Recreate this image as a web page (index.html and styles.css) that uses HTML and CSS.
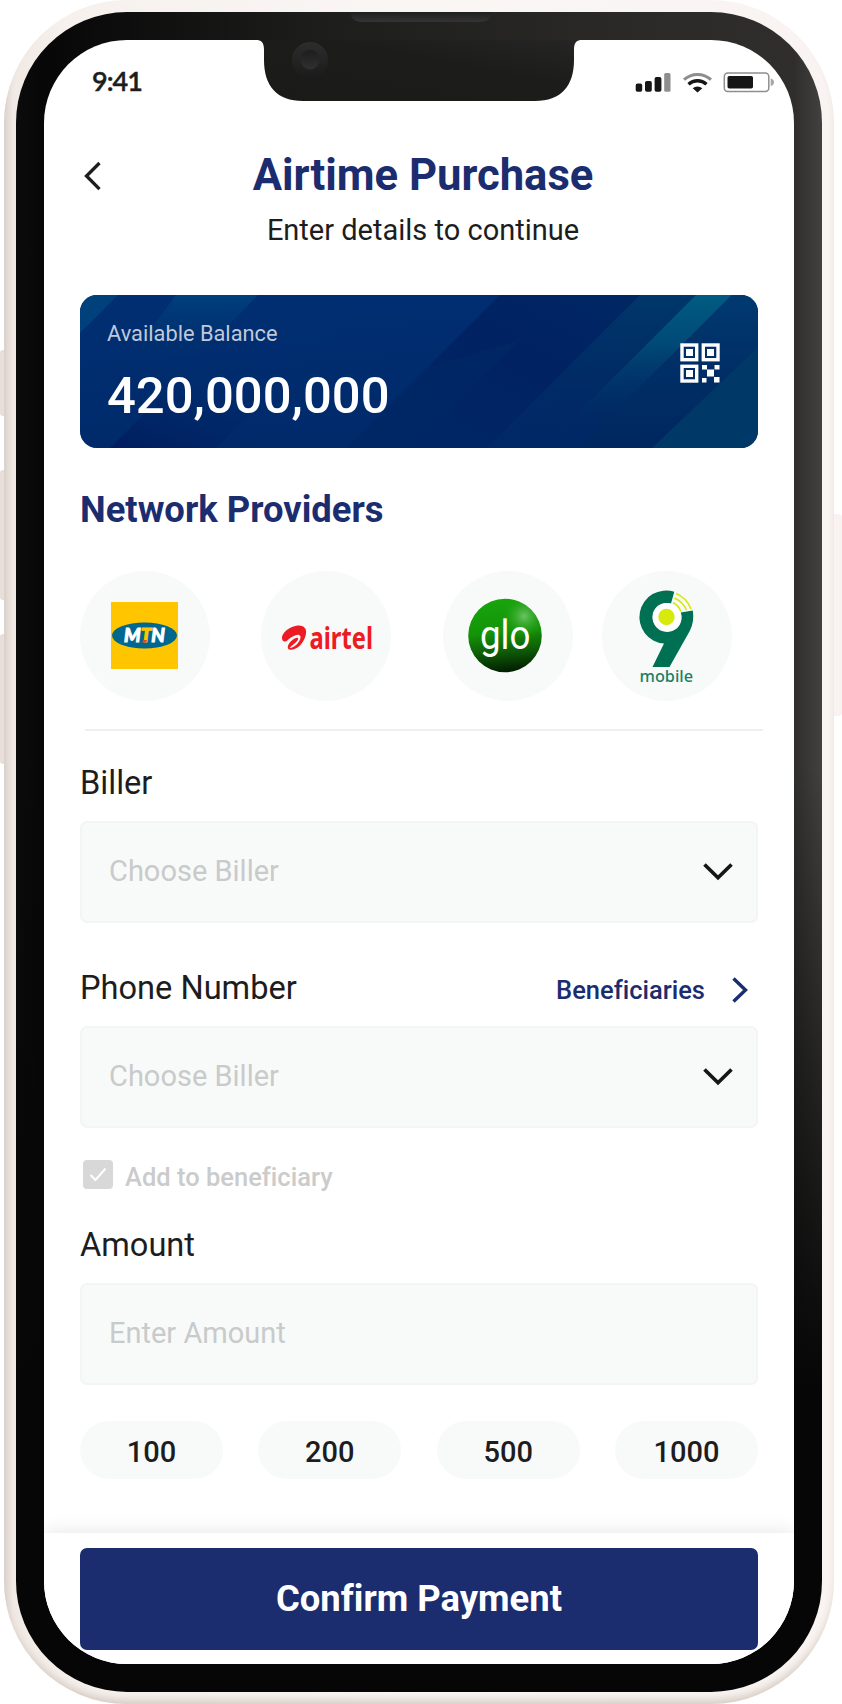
FILE: index.html
```html
<!DOCTYPE html>
<html lang="en">
<head>
<meta charset="utf-8">
<title>Airtime Purchase</title>
<link rel="stylesheet" href="styles.css">
</head>
<body>
<div class="stage">
  <i class="side side-mute"></i><i class="side side-up"></i><i class="side side-down"></i><i class="side side-power"></i>
  <div class="phone">
    <div class="bezel">
      <i class="speaker"></i>
      <main class="screen">
        <svg class="notch" width="326" height="61" viewBox="0 0 326 61">
          <defs>
            <linearGradient id="ng" x1="0" y1="1" x2="1" y2="0"><stop offset="0" stop-color="#1a1a18"/><stop offset=".6" stop-color="#1c1c1b"/><stop offset="1" stop-color="#262525"/></linearGradient>
            <linearGradient id="lens" x1="0" y1="0" x2="0" y2="1"><stop offset="0" stop-color="#2d2d2d"/><stop offset="1" stop-color="#1b1b1a"/></linearGradient>
            <linearGradient id="lens-in" x1="0" y1="0" x2="0" y2="1"><stop offset="0" stop-color="#1d1d1d"/><stop offset="1" stop-color="#303030"/></linearGradient>
          </defs>
          <path fill="url(#ng)" d="M0 0 C5 0 8 2 8 10 V20 C8 46 21 61 47 61 H279 C305 61 318 46 318 20 V10 C318 2 321 0 326 0Z"/>
          <circle cx="54" cy="20" r="18" fill="url(#lens)"/>
          <circle cx="54" cy="19.500" r="9.800" fill="url(#lens-in)"/>
        </svg>
        <div class="status">
          <span class="time">9:41</span>
          <svg class="status-icons" width="140" height="22" viewBox="0 0 140 22">
            <g fill="#161616"><rect x=".7" y="11.600" width="6.500" height="8.200" rx="1.800"/><rect x="10" y="9" width="6.800" height="10.800" rx="1.800"/><rect x="19.600" y="5" width="6.800" height="14.800" rx="1.800"/></g>
            <rect x="29.200" y="1" width="6.300" height="18.800" rx="1.600" fill="#8e8e8e"/>
            <g fill="none"><path d="M49 7.700A20 20 0 0 1 76 7.700" stroke="#8e8e8e" stroke-width="3"/><path d="M53.500 12.200A13.500 13.500 0 0 1 71.500 12.200" stroke="#161616" stroke-width="3.300"/></g>
            <path d="M57.700 16.300A7 7 0 0 1 67.300 16.300L62.500 20.500Z" fill="#161616"/>
            <rect x="89.300" y="1" width="44.500" height="18.500" rx="3.500" fill="none" stroke="#8e8e8e" stroke-width="1.500"/>
            <rect x="92.500" y="4" width="25.500" height="12.500" rx="1.800" fill="#161616"/>
            <path d="M135.700 6.500Q139 7.500 139 10.200T135.700 14Z" fill="#a6a6a6"/>
          </svg>
        </div>

        <header class="header">
          <svg class="back" width="20" height="32" viewBox="0 0 20 32"><path d="M15.500 3L2.500 16L15.500 29.200" fill="none" stroke="#1d1d1d" stroke-width="3.300"/></svg>
          <div class="titles">
            <h1 class="title">Airtime Purchase</h1>
            <p class="subtitle">Enter details to continue</p>
          </div>
        </header>

        <section class="balance">
          <svg class="balance-art" width="678" height="153" viewBox="0 0 678 153" preserveAspectRatio="none">
            <defs>
              <linearGradient id="base" x1="0" x2="1"><stop offset="0" stop-color="#002d6c"/><stop offset=".5" stop-color="#00296a"/><stop offset="1" stop-color="#002760"/></linearGradient>
              <linearGradient id="a" x1="0" y1="0" x2="0" y2="1"><stop offset="0" stop-color="#00407c"/><stop offset=".55" stop-color="#003272" stop-opacity=".7"/><stop offset="1" stop-color="#002d6c" stop-opacity="0"/></linearGradient>
              <linearGradient id="b" x1="1" y1="0" x2="0" y2="1"><stop offset="0" stop-color="#002764"/><stop offset=".4" stop-color="#002263"/><stop offset="1" stop-color="#002866"/></linearGradient>
              <linearGradient id="c" x1="0" y1="0" x2="0" y2="1"><stop offset="0" stop-color="#00386b"/><stop offset="1" stop-color="#002962" stop-opacity="0"/></linearGradient>
              <linearGradient id="d" x1="0" y1="0" x2="0" y2="1"><stop offset="0" stop-color="#005b82"/><stop offset=".35" stop-color="#004a78"/><stop offset="1" stop-color="#002b62" stop-opacity="0"/></linearGradient>
              <linearGradient id="e" x1="0" y1="0" x2="0" y2="1"><stop offset="0" stop-color="#003a70"/><stop offset=".5" stop-color="#002e66"/><stop offset="1" stop-color="#00275f"/></linearGradient>
              <linearGradient id="f" x1="0" y1="0" x2="0" y2="1"><stop offset="0" stop-color="#003075"/><stop offset="1" stop-color="#002a6a"/></linearGradient>
              <linearGradient id="g" x1="0" y1="1" x2="1" y2="0"><stop offset="0" stop-color="#001d60"/><stop offset="1" stop-color="#002a68" stop-opacity="0"/></linearGradient>
            </defs>
            <path fill="url(#base)" d="M0 0H678V153H0Z"/>
            <path fill="url(#f)" d="M38 0H440L287 153H0V38Z" opacity=".7"/>
            <path fill="#00407b" d="M0 0H38L0 38Z"/>
            <path fill="url(#a)" d="M96 0H178L104 76H40Z"/>
            <path fill="url(#g)" d="M30 153L90 93H196L136 153Z"/>
            <path fill="url(#b)" d="M420 0H560L407 153H267Z"/>
            <path fill="#002865" d="M267 153L347 73L440 45L332 153Z" opacity=".7"/>
            <path fill="url(#c)" d="M560 0H618L470 153H407Z"/>
            <path fill="url(#d)" d="M616 0H652L515 137L480 136Z"/>
            <path fill="url(#e)" d="M652 0H678V54L575 153H499Z"/>
            <path fill="#003868" d="M678 52V153H572Z"/>
          </svg>
          <div class="balance-text">
            <p class="balance-label">Available Balance</p>
            <p class="balance-value">420,000,000</p>
          </div>
          <svg class="qr" width="40" height="40" viewBox="0 0 40 40">
            <g fill="none" stroke="#fff" stroke-width="3.400"><rect x="2" y="2" width="14.700" height="14.700"/><rect x="23.300" y="2" width="14.700" height="14.700"/><rect x="2" y="23.300" width="14.700" height="14.700"/></g>
            <g fill="#fff"><path d="M6 6h7v7h-7zM27 6h7v7h-7zM6 27h7v7h-7zM22 22h5v4.500h-5zM34.500 22h5v4.500h-5zM27 26.500h7v7h-7zM22 35h4.500v4.500h-4.500zM34 34h5.500v5.500h-5.500z"/></g>
          </svg>
        </section>

        <h2 class="section-title">Network Providers</h2>
        <div class="providers">
          <div class="provider">
            <svg width="130" height="130" viewBox="0 0 130 130">
              <rect x="31" y="31" width="67" height="67" fill="#ffc600"/>
              <ellipse cx="64.500" cy="64.500" rx="32.500" ry="13" fill="#00678f"/>
              <text class="mtn" x="44" y="71" textLength="41" lengthAdjust="spacingAndGlyphs">M<tspan class="mtn-t">T</tspan>N</text>
              <path d="M63 69h4l-1 2.500h-4z" fill="#e4442f"/>
            </svg>
          </div>
          <div class="provider">
            <svg width="130" height="130" viewBox="0 0 130 130">
              <path fill="#ed1c24" d="M21.500 69C19 64 27 55.500 37 54.600C44 54.300 46.500 59 44.500 65C42.500 72 37 78.500 29.500 78.800C24.500 78.500 27 72 32 68.500C36 65.500 38.500 66.500 36.500 69.500C34.500 72.500 31 74 28.500 77C34 77 40 70 39.500 65.500C38 61.500 31.500 65 28 68C25 71 23 71.500 21.500 69Z"/>
              <text class="airtel" x="48.500" y="78" textLength="63.500" lengthAdjust="spacingAndGlyphs">airtel</text>
            </svg>
          </div>
          <div class="provider">
            <svg width="130" height="130" viewBox="0 0 130 130">
              <defs>
                <linearGradient id="glo" x1=".4" y1="0" x2=".5" y2="1"><stop offset="0" stop-color="#17a50c"/><stop offset=".45" stop-color="#149408"/><stop offset=".7" stop-color="#0f6107"/><stop offset="1" stop-color="#021d01"/></linearGradient>
                <radialGradient id="shine" cx=".76" cy=".24" r=".3"><stop offset="0" stop-color="#7ccb75" stop-opacity=".85"/><stop offset="1" stop-color="#1b9d10" stop-opacity="0"/></radialGradient>
              </defs>
              <circle cx="62" cy="64.500" r="36.800" fill="url(#glo)"/><circle cx="62" cy="64.500" r="36.800" fill="url(#shine)"/>
              <text class="glo" x="37" y="78" textLength="50.500" lengthAdjust="spacingAndGlyphs">glo</text>
            </svg>
          </div>
          <div class="provider">
            <svg width="130" height="130" viewBox="0 0 130 130">
              <path fill="#007053" d="M72.300 20.800A26.600 26.600 0 1 0 62 72.600L50.500 96H67.500L88 59.500Q92.500 50 90.800 39.500L78.800 41.500A14.500 14.500 0 1 1 69 32.500Z"/>
              <circle cx="64.500" cy="46" r="14" fill="#fff"/>
              <circle cx="64.500" cy="46" r="8.200" fill="#d7ea0b"/>
              <g fill="none" stroke="#d7ea0b" stroke-width="1.700"><path d="M74 22.500Q85 27 89 38"/><path d="M72.500 27Q81 31 84.500 39"/><path d="M71 31.500Q76.500 34.500 79 40.500"/></g>
              <text class="nine" x="37.500" y="111" textLength="53.500" lengthAdjust="spacingAndGlyphs">mobile</text>
            </svg>
          </div>
        </div>
        <hr class="divider">

        <form class="form">
          <div class="label-row"><span class="label">Biller</span></div>
          <div class="field"><span class="hint">Choose Biller</span><svg class="chev" width="32" height="20" viewBox="0 0 32 20"><path d="M2.500 2.500L16 15.700L29.500 2.500" fill="none" stroke="#161616" stroke-width="3.700"/></svg></div>

          <div class="label-row label-row-phone"><span class="label">Phone Number</span>
            <a class="benef">Beneficiaries <svg width="18" height="28" viewBox="0 0 18 28"><path d="M2.500 2.500L14.500 14L2.500 25.500" fill="none" stroke="#1b2d6f" stroke-width="3.400"/></svg></a></div>
          <div class="field"><span class="hint">Choose Biller</span><svg class="chev" width="32" height="20" viewBox="0 0 32 20"><path d="M2.500 2.500L16 15.700L29.500 2.500" fill="none" stroke="#161616" stroke-width="3.700"/></svg></div>

          <div class="check-row">
            <svg width="30" height="29" viewBox="0 0 30 29"><rect width="30" height="29" rx="4" fill="#d8d8d8"/><path d="M7.500 15L12.500 20L22.500 8.500" fill="none" stroke="#fff" stroke-width="2"/></svg>
            <span class="check-label">Add to beneficiary</span>
          </div>

          <div class="label-row label-row-amount"><span class="label">Amount</span></div>
          <div class="field"><span class="hint">Enter Amount</span></div>
          <div class="pills"><span class="pill">100</span><span class="pill">200</span><span class="pill">500</span><span class="pill">1000</span></div>
        </form>

        <footer class="footer"><button class="confirm" type="button">Confirm Payment</button></footer>
      </main>
    </div>
  </div>
</div>
</body>
</html>
```
FILE: styles.css
```css
* { box-sizing: border-box; }
body, h1, h2, p, hr { margin: 0; }
body { background: #fff; font-family: Roboto, "Liberation Sans", sans-serif; font-variant-ligatures: none; color: #1d1d1d; }
.stage { position: relative; width: 842px; height: 1704px; overflow: hidden; padding-left: 4px; }
.phone {
  position: relative; width: 830px; height: 1704px; padding: 12px; border-radius: 123px;
  background: linear-gradient(to right, #dcd3cd 0, #f1e9e4 9px, #f6f1ed 60px, #faf6f4 50%, #f9f4f1 100%);
  box-shadow: inset 0 -7px 8px -3px #d5cac2;
}
.bezel {
  position: relative; width: 806px; height: 1680px; padding: 28px; border-radius: 111px;
  background:
    linear-gradient(to bottom, transparent 45%, #060606 82%),
    linear-gradient(to right, #0b0b0b 0, #070707 28px, #1d1d1c 300px, #2a2928 600px, #2f2e2d 778px, #42413f 806px);
}
.speaker { position: absolute; left: 334px; top: 0; width: 142px; height: 10px; border-radius: 0 0 10px 10px; background: linear-gradient(#1f1f1f, #343434); }
.screen { position: relative; display: flex; flex-direction: column; width: 750px; height: 1624px; border-radius: 83px; background: #fff; overflow: hidden; padding: 0 36px; }
.notch { position: absolute; left: 212px; top: 0; }
.side { position: absolute; background: #e8dfda; }
.side-mute { left: 0; top: 350px; width: 5px; height: 66px; border-radius: 3px 0 0 3px; }
.side-up { left: 0; top: 470px; width: 5px; height: 130px; border-radius: 3px 0 0 3px; }
.side-down { left: 0; top: 634px; width: 5px; height: 130px; border-radius: 3px 0 0 3px; }
.side-power { left: 834px; top: 514px; width: 8px; height: 202px; border-radius: 0 3px 3px 0; background: #f8f3f1; }

.status { display: flex; justify-content: space-between; align-items: flex-start; height: 111px; padding-top: 25px; margin-right: -17px; }
.time { font: 600 27px/32px Lato, sans-serif; letter-spacing: -1px; padding-left: 12px; -webkit-text-stroke: .4px #1d1d1d; }
.status-icons { margin-top: 7px; }

.header { display: grid; grid-template-columns: 1fr auto 1fr; padding-left: 8px; }
.back { margin: 9px 0 0 -4px; }
.titles { text-align: center; }
.title { font-size: 43.600px; line-height: 50px; font-weight: 700; color: #1b2d6f; }
.subtitle { margin-top: 12px; font-size: 29px; line-height: 34px; }

.balance { position: relative; display: flex; flex: none; justify-content: space-between; height: 153px; margin-top: 48px; padding: 24px 38px 0 27px; border-radius: 17px; overflow: hidden; color: #fff; }
.balance-art { position: absolute; inset: 0; }
.balance-text, .qr { position: relative; }
.balance-label { margin-top: 1px; font-size: 21.800px; line-height: 28px; color: #bfc9da; }
.balance-value { margin-top: 19px; font-size: 50.800px; line-height: 58px; font-weight: 500; }
.qr { margin-top: 24px; }

.section-title { margin-top: 41px; font-size: 36.400px; line-height: 42px; color: #1b2d6f; }
.providers { display: grid; grid-template-columns: 130px 130px 130px 130px; column-gap: 51.300px; margin-top: 40px; }
.provider { width: 130px; height: 130px; border-radius: 50%; background: #f8faf9; }
.provider:last-child { margin-left: -21.900px; }
.provider svg { display: block; }
.mtn { font: italic 900 18px Lato, sans-serif; fill: #fff; stroke: #fff; stroke-width: .9px; }
.mtn-t { fill: #ffc600; stroke: #ffc600; }
.airtel { font: 700 30px "Noto Sans", sans-serif; fill: #ed1c24; }
.glo { font: 400 41px Roboto, sans-serif; fill: #fff; }
.nine { font: 500 17px "Noto Sans", sans-serif; fill: #1a7f65; }
.divider { flex: none; width: 678px; height: 2px; margin: 28px 0 0 5px; border: 0; background: #efefef; }

.form { display: block; margin-top: 33px; }
.label-row { display: flex; justify-content: space-between; height: 38px; }
.label { font-size: 32.600px; line-height: 38px; }
.label-row-phone { margin-top: 46px; }
.benef { display: flex; align-items: center; gap: 26px; padding: 3px 9px 0 0; font-size: 25.500px; line-height: 36px; font-weight: 500; color: #1b2d6f; }
.field { display: flex; justify-content: space-between; align-items: center; height: 102px; margin-top: 19px; padding: 0 22px 0 27px; border: 2px solid #f3f4f4; border-radius: 7px; background: #f8faf9; }
.hint { font-size: 29px; line-height: 36px; color: #c9caca; padding-bottom: 3px; }
.check-row { display: flex; align-items: center; gap: 12px; height: 29px; margin: 32px 0 0 3px; }
.check-label { font-size: 25.500px; line-height: 30px; font-weight: 500; color: #cbcbcb; padding-top: 4px; }
.label-row-amount { margin-top: 37px; }
.pills { display: flex; justify-content: space-between; margin-top: 36px; }
.pill { width: 143px; height: 58px; border-radius: 29px; background: #f8faf9; text-align: center; font-size: 29px; line-height: 62px; font-weight: 500; }
.footer { flex: none; height: 131px; margin: auto -36px 0; padding: 15px 36px 0; background: #fff; box-shadow: 0 -2px 18px rgba(0,0,0,.09); }
.confirm { display: block; width: 678px; height: 102px; padding: 0; border: 0; border-radius: 7px; background: #1b2d6f; color: #fff; font: 700 36.400px/102px Roboto, sans-serif; font-variant-ligatures: none; }
```
